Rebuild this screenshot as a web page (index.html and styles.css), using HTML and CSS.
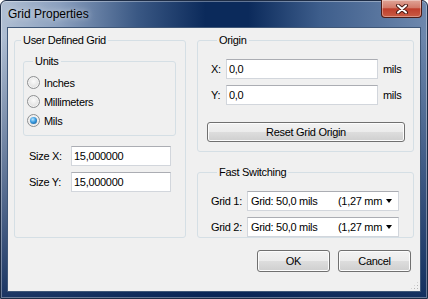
FILE: index.html
```html
<!DOCTYPE html>
<html lang="en">
  <head>
    <meta charset="UTF-8" />
    <title>Grid Properties</title>
    <link rel="stylesheet" href="styles.css">
  </head>
  <body>
    <div class="window">
      <!-- Title bar -->
      <div class="titlebar">
        <span class="title">Grid Properties</span>
        <button class="close" title="Close">
          <svg width="14" height="10" viewBox="0 0 14 10">
            <path d="M3 1.5 L11 8.5 M11 1.5 L3 8.5" stroke="#4a1a14" stroke-width="4" stroke-linecap="round" />
            <path d="M3 1.5 L11 8.5 M11 1.5 L3 8.5" stroke="#fff" stroke-width="2" stroke-linecap="round" />
          </svg>
        </button>
      </div>

      <!-- Dialog body -->
      <div class="client">
        <div class="columns">
          <fieldset class="group group-user">
            <legend>User Defined Grid</legend>
            <fieldset class="group group-units">
              <legend>Units</legend>
              <label class="radio"><span class="radio-box"></span>Inches</label>
              <label class="radio"><span class="radio-box"></span>Millimeters</label>
              <label class="radio"><span class="radio-box checked"></span>Mils</label>
            </fieldset>
            <div class="size-rows">
              <div class="row">
                <span class="lbl lbl-size">Size X:</span>
                <input class="edit edit-size" type="text" value="15,000000" />
              </div>
              <div class="row">
                <span class="lbl lbl-size">Size Y:</span>
                <input class="edit edit-size" type="text" value="15,000000" />
              </div>
            </div>
          </fieldset>

          <div class="col-right">
            <fieldset class="group group-origin">
              <legend>Origin</legend>
              <div class="row">
                <span class="lbl lbl-xy">X:</span>
                <input class="edit edit-origin" type="text" value="0,0" />
                <span class="unit">mils</span>
              </div>
              <div class="row">
                <span class="lbl lbl-xy">Y:</span>
                <input class="edit edit-origin" type="text" value="0,0" />
                <span class="unit">mils</span>
              </div>
              <button class="btn btn-reset">Reset Grid Origin</button>
            </fieldset>

            <fieldset class="group group-fast">
              <legend>Fast Switching</legend>
              <div class="row">
                <span class="lbl lbl-grid">Grid 1:</span>
                <div class="combo">
                  <span class="combo-name">Grid: 50,0 mils</span>
                  <span class="combo-mm">(1,27 mm</span>
                  <span class="combo-arrow"></span>
                </div>
              </div>
              <div class="row">
                <span class="lbl lbl-grid">Grid 2:</span>
                <div class="combo">
                  <span class="combo-name">Grid: 50,0 mils</span>
                  <span class="combo-mm">(1,27 mm</span>
                  <span class="combo-arrow"></span>
                </div>
              </div>
            </fieldset>
          </div>
        </div>

        <div class="actions">
          <button class="btn btn-action">OK</button>
          <button class="btn btn-action">Cancel</button>
        </div>
        <span class="grip"></span>
      </div>
    </div>
  </body>
</html>
```

FILE: styles.css
```css
* {
  box-sizing: border-box;
}

body {
  margin: 0;
  width: 428px;
  height: 299px;
  overflow: hidden;
  background: #fff;
  color: #000;
  font-family: "Liberation Sans", Arial, sans-serif;
  font-size: 11px;
  letter-spacing: -0.3px;
}

/* Window frame */
.window {
  width: 428px;
  height: 299px;
  display: flex;
  flex-direction: column;
  border: 1px solid #1d2c45;
  border-radius: 6px 6px 0 0;
  background:
    linear-gradient(to bottom, rgba(10, 38, 86, 0) 0, rgba(10, 38, 86, 0) 12%, rgba(10, 38, 86, 0.9) 100%),
    linear-gradient(to right, #b0bfd3 0%, #8a9fbe 14%, #3a5884 32%, #0b2a5b 48%, #0b2a5b 58%, #3e5e8c 75%, #6e88ad 100%);
  box-shadow: inset 0 0 0 1px rgba(255, 255, 255, 0.35);
}

.titlebar {
  height: 26px;
  display: flex;
  justify-content: space-between;
  padding: 0 5px 0 7px;
}

.title {
  align-self: center;
  font-size: 12px;
  letter-spacing: 0;
  color: #000;
  text-shadow: 0 0 6px rgba(255, 255, 255, 0.8);
}

.close {
  width: 41px;
  height: 18px;
  margin-top: -1px;
  padding: 0;
  display: flex;
  align-items: center;
  justify-content: center;
  border: 1px solid #4e1c16;
  border-top: none;
  border-radius: 0 0 4px 4px;
  background: linear-gradient(#e0a497 0%, #d27a6a 45%, #bf3e2c 52%, #c95c44 100%);
  box-shadow: inset 0 0 0 1px rgba(255, 255, 255, 0.35);
}

/* Client area */
.client {
  flex: 1;
  position: relative;
  display: flex;
  flex-direction: column;
  margin: 0 6px 6px;
  padding: 6px 5px 5px 6px;
  border: 1px solid #3f5778;
  background: #f0f0f0;
}

.columns {
  display: flex;
  gap: 11px;
}

.col-right {
  width: 217px;
  display: flex;
  flex-direction: column;
  gap: 14px;
}

/* Group boxes */
.group {
  margin: 0;
  padding: 0;
  min-width: 0;
  border: 1px solid #d5dfe5;
  border-radius: 3px;
}

.group legend {
  margin-left: 6px;
  padding: 0 2px;
  line-height: 13px;
}

.group-user {
  width: 172px;
}

.group-units {
  width: 153px;
  margin: 8px 0 0 8px;
  padding: 5px 0 5px 3px;
}

.radio {
  height: 19px;
  display: flex;
  align-items: center;
}

.radio-box {
  width: 13px;
  height: 13px;
  margin-right: 4px;
  border: 1px solid #8d8f91;
  border-radius: 50%;
  background: radial-gradient(circle at 50% 40%, #fbfbfb 0%, #e6e6e6 55%, #cfcfcf 100%);
  box-shadow: inset 0 0 0 1px #f4f4f4;
  display: flex;
  align-items: center;
  justify-content: center;
}

.radio-box.checked::after {
  content: "";
  width: 7px;
  height: 7px;
  border-radius: 50%;
  background: radial-gradient(circle at 40% 35%, #b9e6ff 0%, #3a9be0 45%, #0e4d86 100%);
}

.size-rows {
  margin-top: 10px;
  padding-left: 14px;
  display: flex;
  flex-direction: column;
  gap: 6px;
}

.row {
  height: 20px;
  display: flex;
  align-items: center;
}

.lbl-size {
  width: 42px;
}

.lbl-xy {
  width: 15px;
}

.lbl-grid {
  width: 36px;
}

/* Text boxes */
.edit {
  height: 20px;
  margin: 0;
  padding: 0 2px;
  border: 1px solid #d2d6dc;
  border-top-color: #abadb3;
  background: #fff;
  font: inherit;
  letter-spacing: inherit;
  color: #000;
  outline: none;
}

.edit-size {
  width: 100px;
}

.edit-origin {
  width: 152px;
}

.unit {
  margin-left: 5px;
}

.group-origin {
  padding: 12px 0 9px 13px;
}

.group-origin .row + .row {
  margin-top: 6px;
}

.group-fast {
  flex: 1;
  padding: 12px 0 0 13px;
}

.group-fast .row + .row {
  margin-top: 6px;
}

.combo {
  width: 152px;
  height: 20px;
  display: flex;
  align-items: center;
  padding-left: 3px;
  border: 1px solid #d2d6dc;
  border-top-color: #abadb3;
  background: #fff;
  white-space: nowrap;
}

.combo-name {
  width: 87px;
  flex: none;
}

.combo-mm {
  width: 43px;
  flex: none;
}

.combo-arrow {
  margin-left: 5px;
  width: 0;
  height: 0;
  border-left: 3.5px solid transparent;
  border-right: 3.5px solid transparent;
  border-top: 4px solid #000;
}

/* Buttons */
.btn {
  margin: 0;
  padding: 0;
  border: 1px solid #707070;
  border-radius: 3px;
  background: linear-gradient(#f2f2f2 0%, #ebebeb 50%, #dddddd 51%, #cfcfcf 100%);
  box-shadow: inset 0 0 0 1px #fcfcfc;
  font: inherit;
  letter-spacing: inherit;
  color: #000;
}

.btn-reset {
  width: 198px;
  height: 20px;
  margin: 17px 0 0 -4px;
  display: block;
}

.actions {
  margin-top: 12px;
  padding-right: 4px;
  display: flex;
  justify-content: flex-end;
  gap: 8px;
}

.btn-action {
  width: 73px;
  height: 22px;
}

/* Size grip in the corner */
.grip {
  position: absolute;
  right: 1px;
  bottom: 1px;
  width: 9px;
  height: 9px;
  background-image: radial-gradient(circle, #b5b5b5 0.8px, transparent 1px);
  background-size: 3px 3px;
  clip-path: polygon(100% 0, 100% 100%, 0 100%);
}
```
